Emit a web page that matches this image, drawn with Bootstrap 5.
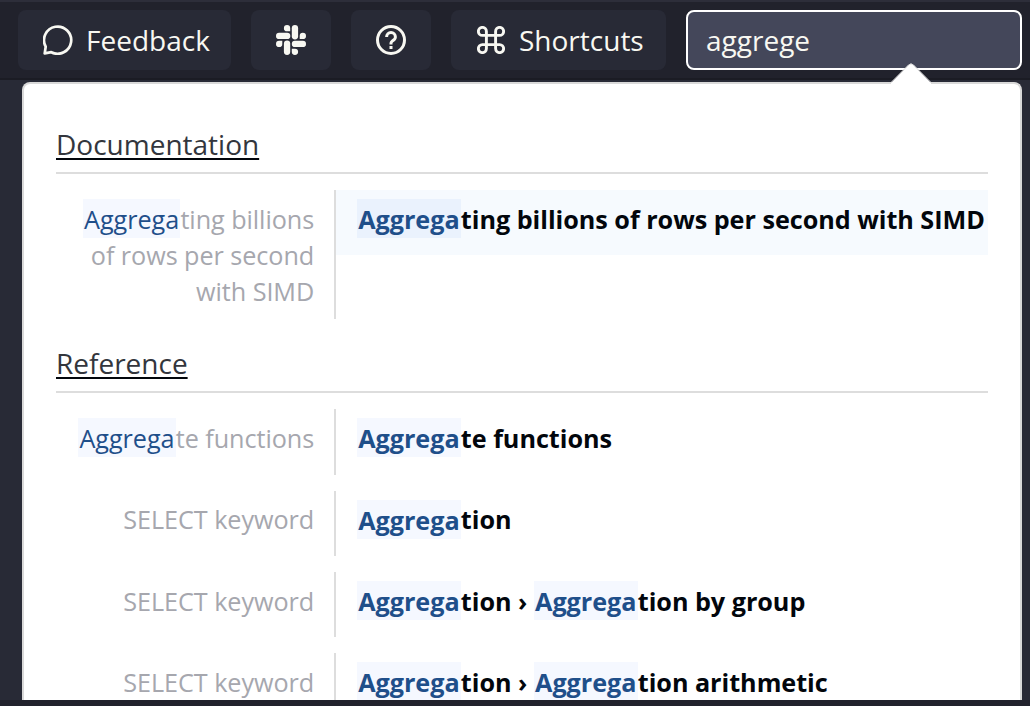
<!DOCTYPE html>
<html lang="en">
<head>
<meta charset="utf-8">
<meta name="viewport" content="width=device-width, initial-scale=1">
<title>Documentation search</title>
<link href="https://cdn.jsdelivr.net/npm/bootstrap@5.3.0/dist/css/bootstrap.min.css" rel="stylesheet">
<style>
  body { font-family: "Open Sans", sans-serif; background: #282a36; color: #f8f8f2; }
  .topbar { height: 80px; background: #21222c; border-top: 2px solid #2d2e3a; border-bottom: 2px solid #1b1c24; padding: 8px 8px 0 18px; gap: 20px; }
  .tool { height: 60px; background: #282a36; border-radius: 8px; color: #f8f8f2; font-size: 28px; line-height: 60px; padding: 0; border: 0; }
  .tool svg { flex: none; }
  .w-feedback { width: 213px; padding-left: 25px; gap: 13px; }
  .w-icon { width: 80px; }
  .w-shortcuts { width: 215px; padding-left: 26px; gap: 14px; }
  .search-box.form-control { width: 336px; height: 60px; background: #44475a; border: 2px solid #fff; border-radius: 8px; color: #f8f8f2; font-size: 28px; padding: 0 18px; box-shadow: none; }
  .results { margin: 2px 8px 0 22px; height: 618px; border: 2px solid #d9d9d9; border-bottom: 0; border-radius: 8px 8px 0 0; background: #fff; padding: 32px 32px 0; }
  .pointer { right: 89px; top: -22px; }
  .results-clip { height: 584px; }
  .group-title { height: 58px; border-bottom: 2px solid #ddd; font-size: 28px; line-height: 56px; color: #33363d; }
  .group-title span { text-decoration: underline; text-decoration-color: #02060c; text-decoration-thickness: 2px; text-underline-offset: 3px; text-decoration-skip-ink: none; }
  .hit { margin: 16px 0; font-size: 25.2px; line-height: 36px; letter-spacing: -.025px; }
  .hit + .hit { margin-top: 0; }
  .hit-page { width: 279.6px; flex: none; padding: 10.66px 19.4px 10.66px 0; color: #a6a7ae; border-right: 2px solid #ddd; letter-spacing: -.05px; }
  .hit-title { color: #02060c; font-weight: 700; height: 65.3px; padding: 10.66px 0 0 21.33px; white-space: nowrap; }
  .hit-title.chosen { background: #f6fafe; }
  .hl { color: #1f4f8a; background: #f5f8ff; padding: .1em .05em; }
  .chosen .hl { background: #eaf2fd; }
  .bottombar { height: 6px; background: #21222c; }
</style>
<script src="https://cdn.jsdelivr.net/npm/bootstrap@5.3.0/dist/js/bootstrap.bundle.min.js"></script>
</head>
<body class="vh-100 overflow-hidden">
<nav class="topbar d-flex align-items-start">
  <button class="tool w-feedback d-flex align-items-center" type="button">
    <svg width="30" height="30" viewBox="0 0 30 30" fill="none" stroke="currentColor" stroke-width="2.7" stroke-linejoin="round"><path d="M1.7 28.4 2.7 21.7A13.6 13.6 0 1 1 8.3 27.2Z"/></svg>
    <span>Feedback</span>
  </button>
  <button class="tool w-icon d-flex align-items-center justify-content-center" type="button" aria-label="Slack">
    <svg width="30" height="30" viewBox="0 0 30 30" fill="currentColor"><rect x="15.8" width="6.3" height="14.4" rx="3.15"/><rect y="7.8" width="14.3" height="6.3" rx="3.15"/><rect x="15.8" y="15.8" width="14.2" height="6.3" rx="3.15"/><rect x="7.9" y="15.6" width="6.3" height="14.4" rx="3.15"/><path d="M14.2 6.3h-3.15A3.15 3.15 0 1 1 14.2 3.15ZM23.7 14.1v-3.15a3.15 3.15 0 1 1 3.15 3.15ZM15.8 23.7h3.15a3.15 3.15 0 1 1-3.15 3.15ZM6.3 15.8v3.15a3.15 3.15 0 1 1-3.15-3.15Z"/></svg>
  </button>
  <button class="tool w-icon d-flex align-items-center justify-content-center" type="button" aria-label="Help">
    <svg width="36" height="36" viewBox="0 0 24 24" fill="currentColor"><path d="M12 6a3.94 3.94 0 0 0-3.934 3.934h2a1.934 1.934 0 0 1 3.868 0c0 .598-.481 1.032-1.216 1.626a9.2 9.2 0 0 0-.691.599c-.998.997-1.027 2.056-1.027 2.174V15h2l-.001-.633c.001-.016.033-.386.441-.793.15-.15.339-.3.535-.458.779-.631 1.958-1.584 1.958-3.182A3.94 3.94 0 0 0 12 6zm-1 10h2v2h-2z"/><circle cx="12" cy="12" r="9" fill="none" stroke="currentColor" stroke-width="2"/></svg>
  </button>
  <button class="tool w-shortcuts d-flex align-items-center" type="button">
    <svg width="28" height="28" viewBox="0 0 28 28" fill="none" stroke="currentColor" stroke-width="2.9"><path d="M9.4 9.4V5.4a4 4 0 1 0-4 4H22.6a4 4 0 1 0-4-4V22.6a4 4 0 1 0 4-4H5.4a4 4 0 1 0 4 4Z"/></svg>
    <span>Shortcuts</span>
  </button>
  <input class="search-box form-control" type="text" value="aggrege" aria-label="Search">
</nav>
<main class="results position-relative">
  <svg class="pointer position-absolute" width="40" height="22" viewBox="0 0 40 22"><path d="M0 22V21L17.5 3Q20 .6 22.5 3L40 21V22Z" fill="#fff"/><path d="M0 20.5 17.5 3Q20 .6 22.5 3L40 20.5" fill="none" stroke="#d9d9d9" stroke-width="1"/></svg>
  <div class="results-clip overflow-hidden">
    <section>
      <div class="group-title"><span>Documentation</span></div>
      <div class="hit d-flex">
        <div class="hit-page text-end"><span class="hl">Aggrega</span>ting billions of rows per second with SIMD</div>
        <div class="hit-title chosen flex-grow-1"><span class="hl">Aggrega</span>ting billions of rows per second with SIMD</div>
      </div>
    </section>
    <section>
      <div class="group-title"><span>Reference</span></div>
      <div class="hit d-flex">
        <div class="hit-page text-end"><span class="hl">Aggrega</span>te functions</div>
        <div class="hit-title flex-grow-1"><span class="hl">Aggrega</span>te functions</div>
      </div>
      <div class="hit d-flex">
        <div class="hit-page text-end">SELECT keyword</div>
        <div class="hit-title flex-grow-1"><span class="hl">Aggrega</span>tion</div>
      </div>
      <div class="hit d-flex">
        <div class="hit-page text-end">SELECT keyword</div>
        <div class="hit-title flex-grow-1"><span class="hl">Aggrega</span>tion › <span class="hl">Aggrega</span>tion by group</div>
      </div>
      <div class="hit d-flex">
        <div class="hit-page text-end">SELECT keyword</div>
        <div class="hit-title flex-grow-1"><span class="hl">Aggrega</span>tion › <span class="hl">Aggrega</span>tion arithmetic</div>
      </div>
    </section>
  </div>
</main>
<div class="bottombar"></div>
</body>
</html>
